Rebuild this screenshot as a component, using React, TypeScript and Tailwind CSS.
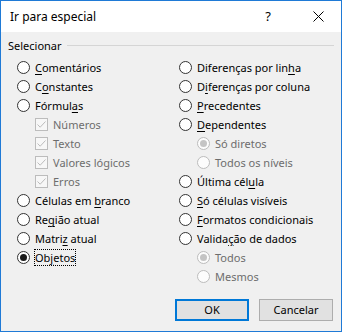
import type { ReactNode } from "react";

const font = { fontFamily: '"Noto Sans", "Open Sans", sans-serif' };

function Radio({ checked = false, disabled = false }: { checked?: boolean; disabled?: boolean }) {
  return (
    <span
      className={`flex h-[13px] w-[13px] shrink-0 items-center justify-center rounded-full border ${
        disabled ? "border-[#bcbcbc] bg-[#fcfcfc]" : "border-[#333333] bg-white"
      }`}
    >
      {checked && (
        <span className={`h-[7px] w-[7px] rounded-full ${disabled ? "bg-[#c4c4c4]" : "bg-[#1a1a1a]"}`} />
      )}
    </span>
  );
}

function Check() {
  return (
    <span className="flex h-[13px] w-[13px] shrink-0 items-center justify-center border border-[#bcbcbc] bg-[#f7f7f7]">
      <svg width="11" height="11" viewBox="0 0 11 11">
        <path d="M1.5 5.5 L4.2 8.2 L9.5 2.5" fill="none" stroke="#bcbcbc" strokeWidth="1" />
      </svg>
    </span>
  );
}

type Item = {
  label: ReactNode;
  kind: "radio" | "check";
  sub?: boolean;
  checked?: boolean;
  disabled?: boolean;
  focus?: boolean;
};

const u = (s: string) => <span className="underline underline-offset-2">{s}</span>;

const left: Item[] = [
  { label: <>{u("C")}omentários</>, kind: "radio" },
  { label: <>C{u("o")}nstantes</>, kind: "radio" },
  { label: <>Fórmul{u("a")}s</>, kind: "radio" },
  { label: "Números", kind: "check", sub: true, disabled: true },
  { label: "Texto", kind: "check", sub: true, disabled: true },
  { label: "Valores lógicos", kind: "check", sub: true, disabled: true },
  { label: "Erros", kind: "check", sub: true, disabled: true },
  { label: <>Células em {u("b")}ranco</>, kind: "radio" },
  { label: <>Re{u("g")}ião atual</>, kind: "radio" },
  { label: <>Matri{u("z")} atual</>, kind: "radio" },
  { label: <>Ob{u("j")}etos</>, kind: "radio", checked: true, focus: true },
];

const right: Item[] = [
  { label: <>Diferenças por lin{u("h")}a</>, kind: "radio" },
  { label: <>D{u("i")}ferenças por coluna</>, kind: "radio" },
  { label: <>{u("P")}recedentes</>, kind: "radio" },
  { label: <>{u("D")}ependentes</>, kind: "radio" },
  { label: "Só diretos", kind: "radio", sub: true, disabled: true, checked: true },
  { label: "Todos os níveis", kind: "radio", sub: true, disabled: true },
  { label: <>Última cél{u("u")}la</>, kind: "radio" },
  { label: <>{u("S")}ó células visíveis</>, kind: "radio" },
  { label: <>{u("F")}ormatos condicionais</>, kind: "radio" },
  { label: <>Valida{u("ç")}ão de dados</>, kind: "radio" },
  { label: "Todos", kind: "radio", sub: true, disabled: true, checked: true },
  { label: "Mesmos", kind: "radio", sub: true, disabled: true },
];

function Row({ item }: { item: Item }) {
  return (
    <div className={`flex h-[19px] items-center gap-[5px] ${item.sub ? "pl-[18px]" : ""}`}>
      {item.kind === "radio" ? <Radio checked={item.checked} disabled={item.disabled} /> : <Check />}
      <span
        className={`whitespace-nowrap leading-[15px] ${item.disabled ? "text-[#6d6d6d]" : "text-black"} ${
          item.focus ? "outline outline-1 outline-dotted outline-black" : ""
        }`}
      >
        {item.label}
      </span>
    </div>
  );
}

export default function App() {
  return (
    <div
      className="flex h-[332px] w-[342px] flex-col border border-[#1f7ad6] bg-[#f0f0f0] text-[11px]"
      style={font}
    >
      <div className="flex h-[31px] shrink-0 items-center bg-white pl-[9px] pr-[17px] text-[12px]">
        <span className="flex-1 text-black">Ir para especial</span>
        <span className="mr-[42px] text-[13px] text-black">?</span>
        <svg width="11" height="11" viewBox="0 0 11 11">
          <path d="M0.5 0.5 L10.5 10.5 M10.5 0.5 L0.5 10.5" stroke="#000" strokeWidth="1" />
        </svg>
      </div>

      <div className="flex items-center gap-[5px] px-[7px] pt-[6px]">
        <span className="leading-[15px] text-black">Selecionar</span>
        <div className="h-px flex-1 bg-[#d5d5d5]" />
      </div>

      <div className="grid grid-cols-[162px_1fr] pl-[16px] pt-[5px]">
        <div className="flex flex-col">
          {left.map((item, i) => (
            <Row key={i} item={item} />
          ))}
        </div>
        <div className="flex flex-col">
          {right.map((item, i) => (
            <Row key={i} item={item} />
          ))}
        </div>
      </div>

      <div className="mt-auto flex justify-end gap-[10px] pb-[10px] pr-[8px]">
        <button className="h-[22px] w-[74px] border-2 border-[#0078d7] bg-[#e1e1e1] text-black">OK</button>
        <button className="h-[22px] w-[74px] border border-[#adadad] bg-[#e1e1e1] text-black">Cancelar</button>
      </div>
    </div>
  );
}
